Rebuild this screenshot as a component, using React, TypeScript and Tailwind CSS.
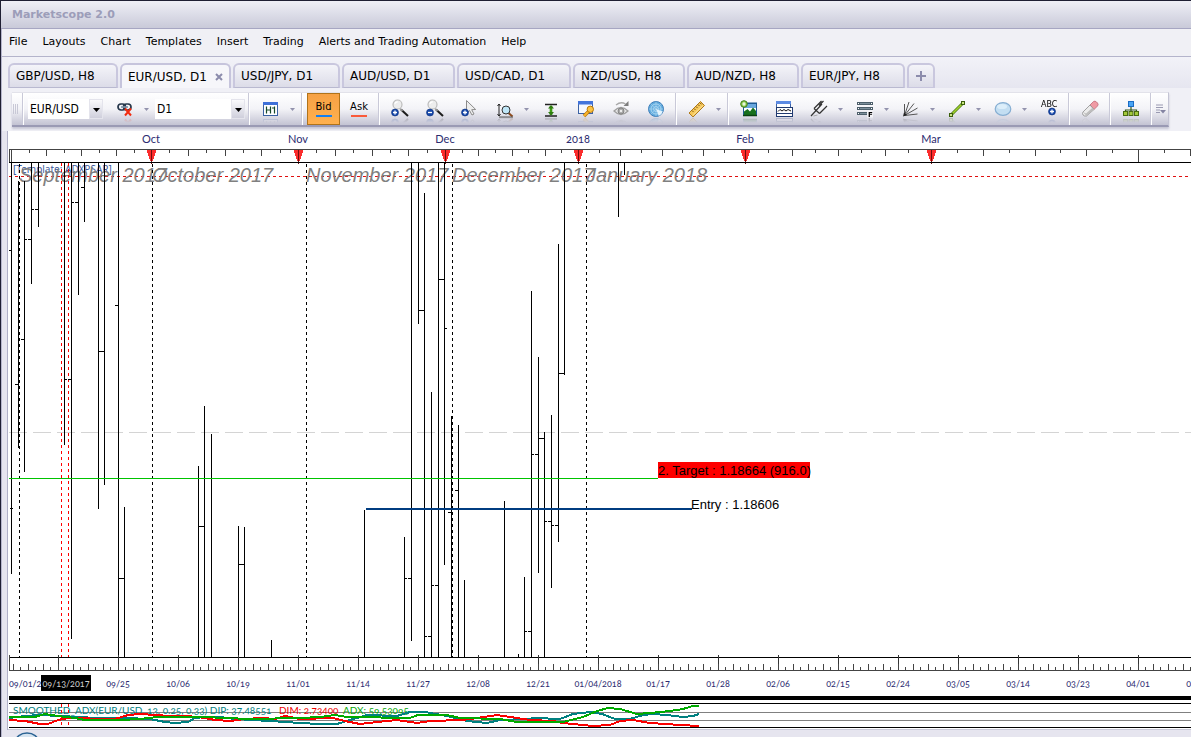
import React from "react";

const UI = "font-['DejaVu_Sans',Verdana,sans-serif]";
const TAHOMA = "font-['DejaVu_Sans_Condensed','Noto_Sans',Tahoma,sans-serif]";

const MENU = ["File", "Layouts", "Chart", "Templates", "Insert", "Trading", "Alerts and Trading Automation", "Help"];

const TABS = [
  { label: "GBP/USD, H8", width: "w-[110px]" },
  { label: "EUR/USD, D1", width: "w-[111px]", active: true },
  { label: "USD/JPY, D1", width: "w-[107px]" },
  { label: "AUD/USD, D1", width: "w-[113px]" },
  { label: "USD/CAD, D1", width: "w-[114px]" },
  { label: "NZD/USD, H8", width: "w-[112px]" },
  { label: "AUD/NZD, H8", width: "w-[112px]" },
  { label: "EUR/JPY, H8", width: "w-[104px]" },
];

/* ---------- toolbar icons ---------- */

function Icon({ children }: { children: React.ReactNode }) {
  return (
    <svg
      width="18"
      height="18"
      viewBox="0 0 18 18"
      fill="none"
      className="overflow-visible [-webkit-box-reflect:below_-1px_linear-gradient(transparent_68%,rgba(0,0,0,0.28))]"
      aria-hidden="true"
    >
      {children}
    </svg>
  );
}

const Badge = ({ x, y, minus }: { x: number; y: number; minus?: boolean }) => (
  <g>
    <circle cx={x} cy={y} r="3.5" fill="#1446a8" stroke="#0c2f7c" strokeWidth="0.6" />
    <path d={minus ? `M${x - 2} ${y}h4` : `M${x - 2} ${y}h4M${x} ${y - 2}v4`} stroke="#fff" strokeWidth="1.3" />
  </g>
);

const Lens = () => (
  <g>
    <path d="M10 9.500L17 16" stroke="#1c1c1c" strokeWidth="2" />
    <path d="M9 8.500L11.500 11" stroke="#999" strokeWidth="1.6" />
    <circle cx="6.5" cy="4.500" r="4.500" fill="#ededed" stroke="#bcbcbc" strokeWidth="1.2" />
    <path d="M3.800 3.800a3 3 0 0 1 3-2" stroke="#fff" strokeWidth="1.2" />
  </g>
);

const icons = {
  link: (
    <Icon>
      <rect x="2" y="4" width="7.500" height="6" rx="3" stroke="#27384c" strokeWidth="1.700" />
      <rect x="7.500" y="4" width="7.500" height="6" rx="3" stroke="#27384c" strokeWidth="1.700" />
      <path d="M5 7h7" stroke="#7f95aa" strokeWidth="1.6" />
      <path d="M9 8.500l6 7M15 8.500l-6 7" stroke="#f22c10" strokeWidth="2" />
    </Icon>
  ),
  period: (
    <Icon>
      <rect x="1.500" y="2.500" width="14" height="13" fill="#fff" stroke="#3c62a4" />
      <path d="M1 2h15v3H1z" fill="#3f70d8" />
      <path d="M4.500 6.500v7M4.500 10h4M8.500 6.500v7M10 8h2M12.500 6.500v7" stroke="#174a2a" strokeWidth="1.200" />
    </Icon>
  ),
  zoomIn: <Icon><Lens /><Badge x={4} y={12.500} /></Icon>,
  zoomOut: <Icon><Lens /><Badge x={4} y={12.500} minus /></Icon>,
  cursor: (
    <Icon>
      <path d="M5.500.5v13l3-3 2.500 4.500 2-1-2.300-4.300 4-.2z" fill="#eee" stroke="#8a8a8a" />
      <Badge x={4} y={12.500} />
    </Icon>
  ),
  range: (
    <Icon>
      <path d="M3 4v12M1.500 6L3 4l1.500 2M1.500 14L3 16l1.500-2" stroke="#222" />
      <path d="M12.500 13l4 3.500" stroke="#8c4a1c" strokeWidth="2" />
      <circle cx="10" cy="10" r="4" fill="#bfe6f7" stroke="#333" />
      <path d="M3 17h14" stroke="#555" />
    </Icon>
  ),
  autoscale: (
    <Icon>
      <path d="M3 4.500h12M3 16h12" stroke="#222" strokeWidth="1.300" />
      <path d="M9 6v9" stroke="#3f9c14" strokeWidth="2.600" />
      <path d="M6 8.500L9 5l3 3.500zM6 12l3 3.500 3-3.500z" fill="#2f7d10" />
    </Icon>
  ),
  properties: (
    <Icon>
      <rect x="1.500" y="1.500" width="14" height="12" fill="#f4f8ff" stroke="#3c62a4" />
      <path d="M1 1h15v3.500H1z" fill="#4274dc" />
      <path d="M7 16l5-5" stroke="#b87608" strokeWidth="3.400" />
      <path d="M7.200 15.800l5-5" stroke="#f9b52c" strokeWidth="2" />
      <circle cx="13.300" cy="9.300" r="3.200" fill="#fcc544" stroke="#b87608" />
    </Icon>
  ),
  eye: (
    <Icon>
      <path d="M2 11q7-7 14 0-7 7-14 0z" fill="#e8e8e8" stroke="#a0a0a0" strokeWidth="1.300" />
      <circle cx="9" cy="11" r="3" fill="#a8a8a8" stroke="#858585" />
      <circle cx="9" cy="11" r="1.200" fill="#eee" />
      <path d="M4 5q5-4 9.500-1" stroke="#a8a8a8" strokeWidth="1.300" />
      <path d="M16.500 1v5h-5z" fill="#7c7c7c" />
    </Icon>
  ),
  radar: (
    <Icon>
      <circle cx="9" cy="9" r="7.500" fill="#64aee0" stroke="#3d7db8" />
      <circle cx="9" cy="9" r="5" stroke="#b9def5" strokeWidth="0.800" />
      <circle cx="9" cy="9" r="2.500" stroke="#b9def5" strokeWidth="0.800" />
      <path d="M9 1.500v15M1.500 9h15M3.700 3.700l10.600 10.600M14.300 3.700L3.700 14.300" stroke="#a8d3ef" strokeWidth="0.600" />
      <path d="M9 9l6.800 2.500a7.300 7.300 0 0 1-4 4.500z" fill="#e4f4fd" />
    </Icon>
  ),
  ruler: (
    <Icon>
      <path d="M1 13L12.500 1.500l4 4L5 17z" fill="#f6c85a" stroke="#b07a1c" />
      <path d="M4 10.500l1.500 1.500M6 8.500L7.500 10M8 6.500L9.500 8M10 4.500L11.500 6M12 2.800l1.500 1.500" stroke="#7c5412" />
      <path d="M4.800 15.500L15 5.500" stroke="#fbe5a4" />
    </Icon>
  ),
  image: (
    <Icon>
      <rect x="3" y="2.500" width="14" height="13.500" fill="#1d5a94" />
      <path d="M4 4h12v9H4z" fill="#fff" />
      <path d="M4 4h12v4H4z" fill="#6aa8de" />
      <path d="M4 15.500v-4l3.500-2.500 2.500 2.500 3-4 3 3.500v4.500z" fill="#17701c" />
      <path d="M3 15.500h14" stroke="#0c4210" strokeWidth="1.500" />
      <circle cx="4" cy="4" r="3.300" fill="#90cc50" stroke="#3f7e18" />
      <path d="M2.300 4h3.400M4 2.300v3.400" stroke="#fff" strokeWidth="1.200" />
    </Icon>
  ),
  windows: (
    <Icon>
      <rect x="1.500" y="1.500" width="14" height="10" fill="#fff" stroke="#3c62a4" />
      <path d="M1 1h15v3H1z" fill="#5d8be2" />
      <rect x="1.500" y="7.500" width="16" height="9" fill="#fff" stroke="#203a70" />
      <path d="M3 11.500l2-2 2 1.500 2-1.500 2 1.500 2-1.500 3 1.500" stroke="#111" />
      <path d="M2 13.500h15" stroke="#203a70" />
    </Icon>
  ),
  pitchfork: (
    <Icon>
      <path d="M1 16L12 4M4 8.500l5.500 5M4 8.500L11.500 1M9.500 13.500L17 6M9 5.500L13.500 1" stroke="#333" strokeWidth="1.200" />
      <path d="M3.500 16l4-1" stroke="#999" strokeWidth="0.800" />
    </Icon>
  ),
  levels: (
    <Icon>
      {[2, 7, 12].map((y) => (
        <g key={y}>
          <path d={`M1 ${y}h16v3H1z`} fill="#4d5f6b" />
          <path d={`M2 ${y + 1.5}h1M15 ${y + 1.5}h1`} stroke="#fff" />
          <path d={`M4 ${y + 1.5}h10`} stroke="#7c8f9b" />
        </g>
      ))}
      <path d="M11 10.500h6v7h-6z" fill="#f4f4f8" />
      <text x="12" y="17" fontSize="7" fontWeight="bold" fill="#000">F</text>
    </Icon>
  ),
  fan: (
    <Icon>
      <path d="M2.500 15.500V4M2.500 15.500L7 2M2.500 15.500L12 3.500M2.500 15.500L15.500 8M2.500 15.500l13-1.500" stroke="#555" />
      <path d="M1 16.500l4-1.500-3-2.500z" fill="#222" />
    </Icon>
  ),
  line: (
    <Icon>
      <path d="M3 15L15 3" stroke="#4c7a10" strokeWidth="3" />
      <path d="M3 15L15 3" stroke="#a0d030" strokeWidth="1.600" />
      <rect x="1.500" y="13.500" width="3" height="3" fill="#c9e680" stroke="#3c600c" />
      <rect x="13.500" y="1.500" width="3" height="3" fill="#c9e680" stroke="#3c600c" />
    </Icon>
  ),
  ellipse: (
    <Icon>
      <ellipse cx="9" cy="9" rx="7.800" ry="6.300" fill="#c3def2" stroke="#86aed2" strokeWidth="1.200" />
      <ellipse cx="8" cy="6.500" rx="5" ry="2.600" fill="#dceefa" />
    </Icon>
  ),
  text: (
    <Icon>
      <text x="1" y="7" fontSize="8" fill="#000">ABC</text>
      <Badge x={12} y={11.500} />
    </Icon>
  ),
  eraser: (
    <Icon>
      <path d="M9 5l3.500-3.500q1.500-1 3 .5l1 1q1.300 1.500 0 3L13 9.500z" fill="#ef9aa4" stroke="#c06a78" strokeWidth="0.800" />
      <path d="M9 5L2 12q-1 1.500 0 3 1.500 1.500 3.500 1L13 9.500z" fill="#ececec" stroke="#8d8d8d" strokeWidth="0.800" />
      <path d="M2 12l3.500 4L13 9.500l-1.500-1.700L5 13.500z" fill="#bdbdbd" />
    </Icon>
  ),
  tree: (
    <Icon>
      <path d="M9 6v4M3.500 12v-2h11v2M9 10v2" stroke="#35591c" strokeWidth="1.200" />
      <rect x="6.500" y="1.500" width="5" height="5" fill="#49a4f4" stroke="#1c6cc4" />
      <rect x="1.500" y="11.500" width="4" height="4" fill="#a2c83a" stroke="#4a6c10" />
      <rect x="7" y="11.500" width="4" height="4" fill="#a2c83a" stroke="#4a6c10" />
      <rect x="12.500" y="11.500" width="4" height="4" fill="#a2c83a" stroke="#4a6c10" />
    </Icon>
  ),
};

/* ---------- toolbar parts ---------- */

const Sep = () => <span className="mr-px h-8 w-0.5 border-l border-[#c9c9d8] bg-white" />;

function Tool({ icon, label, menu }: { icon: React.ReactNode; label: string; menu?: boolean }) {
  return (
    <span className="flex shrink-0 items-center">
      <button aria-label={label} className="flex h-8 w-8 items-center justify-center">
        {icon}
      </button>
      {menu && (
        <button aria-label={`${label} options`} className="flex h-8 w-[11px] items-center justify-center">
          <svg width="5" height="3" viewBox="0 0 5 3" aria-hidden="true">
            <path d="M0 0h5L2.500 3z" fill="#9393ad" />
          </svg>
        </button>
      )}
    </span>
  );
}

function Combo({ label, options, className }: { label: string; options: string[]; className: string }) {
  return (
    <label className={`relative flex h-5 shrink-0 ${className}`}>
      <select aria-label={label} className={`h-5 w-full appearance-none bg-white pl-0.5 text-[12px] leading-5 text-black ${TAHOMA}`}>
        {options.map((o) => (
          <option key={o}>{o}</option>
        ))}
      </select>
      <span className="pointer-events-none absolute inset-y-0 right-0 flex w-3.5 items-center justify-center border border-[#e4e4ec] bg-linear-to-b from-[#fafafc] to-[#cfcfdc] pt-0.5">
        <svg width="7" height="4" viewBox="0 0 7 4" aria-hidden="true">
          <path d="M0 0h7L3.500 4z" fill="#000" />
        </svg>
      </span>
    </label>
  );
}

/* ---------- chart data ---------- */

const TOP = 162;
const BASE = 657;

const BARS: [number, number, number][] = [
  [11, TOP, 574], [18, 181, 448], [24, 181, 472], [31, TOP, 284], [38, TOP, 227],
  [64, TOP, 445], [71, TOP, 639], [78, TOP, 295], [84, TOP, 222], [98, TOP, 509],
  [104, TOP, 485], [118, TOP, BASE], [124, 507, BASE], [198, 466, BASE], [204, 406, BASE],
  [211, 434, BASE], [238, 526, BASE], [244, 527, BASE], [271, 640, BASE], [364, 510, BASE],
  [404, 537, BASE], [411, TOP, 641], [418, TOP, 324], [424, 193, BASE], [431, 392, BASE],
  [438, TOP, BASE], [444, TOP, 565], [451, 416, BASE], [458, 425, BASE], [464, 580, BASE],
  [504, 501, BASE], [518, 654, BASE], [524, 577, BASE], [531, 291, BASE], [538, 357, 573],
  [544, 432, BASE], [551, 415, 588], [558, 244, 542], [564, TOP, 375], [618, TOP, 217],
  [624, TOP, 175],
];

/* close of one bar and open of the next: [x, next x, y] */
const STEPS: [number, number, number][] = [
  [24, 31, 239], [31, 38, 209], [64, 71, 379], [71, 78, 202], [98, 104, 351], [118, 124, 578],
  [198, 204, 526], [238, 244, 564], [404, 411, 578], [418, 424, 310], [424, 431, 636],
  [431, 438, 585], [438, 444, 279], [524, 531, 631], [531, 538, 454], [538, 544, 438],
  [544, 551, 521], [551, 558, 525], [558, 564, 373],
];
const OPENS: [number, number][] = [[12, 250], [18, 384], [24, 339], [84, 187], [118, 305], [451, 512], [458, 490]];
const CLOSES: [number, number][] = [[10, 508], [444, 328]];

const MONTHS = [
  { x: 151, label: "Oct" }, { x: 298, label: "Nov" }, { x: 445, label: "Dec" },
  { x: 578, label: "2018" }, { x: 745, label: "Feb" }, { x: 931, label: "Mar" },
];
const MONTH_EDGES = [11, 151, 298, 445, 578, 745, 931, 1138, 1345];

const WATERMARKS = [
  { x: 19, label: "September 2017" }, { x: 152, label: "October 2017" }, { x: 306, label: "November 2017" },
  { x: 452, label: "December 2017" }, { x: 586, label: "January 2018" },
];

const DATES = [
  "09/25", "10/06", "10/19", "11/01", "11/14", "11/27", "12/08", "12/21", "01/04/2018", "01/17", "01/28",
  "02/06", "02/15", "02/24", "03/05", "03/14", "03/23", "04/01", "04/10",
];

const ADX =
  "9,717 35,717 45,714 58,716 66,717 75,718 85,720 120,720 140,719 158,717 188,717 205,717 225,718 250,719 300,718 320,717 335,715 347,717 375,717 387,718 410,718 418,715 447,715 460,718 500,719 517,722 563,722 583,717 597,711 608,708 620,709 637,714 650,713 670,711 683,709 693,706 699,706";
const DIP =
  "9,718 25,716 40,715 60,716 80,717 95,718 125,718 150,719 165,722 175,723 188,722 195,718 205,717 220,717 235,719 270,721 285,722 300,723 320,724 337,724 350,720 367,715 397,716 410,712 425,712 447,716 467,721 487,723 500,720 527,719 535,718 560,719 573,714 590,712 602,714 615,719 630,719 643,715 653,714 667,715 683,717 693,716 699,714";
const DIM =
  "9,720 25,721 40,724 48,724 58,720 68,718 80,718 100,719 115,719 128,715 140,714 170,716 188,716 205,718 215,720 230,721 245,719 262,718 275,719 285,716 300,719 333,718 345,721 360,724 377,722 397,720 417,723 430,721 463,720 477,718 497,715 517,718 530,720 553,721 563,723 593,726 610,725 620,721 633,720 650,723 680,725 699,726";

const range = (from: number, to: number, step: number) =>
  Array.from({ length: Math.ceil((to - from) / step) }, (_, i) => from + i * step);

function Chart() {
  const axis = "font-['Lato','Open_Sans',sans-serif] oldstyle-nums";
  return (
    <svg className="block h-[599px] w-full" shapeRendering="crispEdges" role="img" aria-label="EUR/USD daily chart">
      {/* drawing units are window pixels, the plot starts at (8, 131) */}
      <g transform="translate(-8 -131)">
        <text x="13" y="173" fill="#3c5a9c" className="font-['Noto_Sans',sans-serif] text-[10px]">[Template: ADXPSAR]</text>

        {/* month ruler */}
        <path d="M9 149.500H4000M9.500 149v13M11.500 149v13" stroke="#444" />
        {MONTH_EDGES.slice(0, -1).map((x, i) =>
          range(1, 8, 1).map((k) => {
            const tx = Math.round(x + ((MONTH_EDGES[i + 1] - x) * k) / 8);
            return <path key={`${x}-${k}`} d={`M${tx}.5 149v${k % 2 ? 4 : 7}`} stroke="#444" />;
          }),
        )}
        <path d="M1138.500 149v13" stroke="#444" />
        {MONTHS.map((m) => (
          <g key={m.label}>
            <path d={`M${m.x - 4} 150h9v3h-1v3h-1v3h-1v2h-3v-2h-1v-3h-1v-3h-1z`} fill="#fb2c2c" />
            <path d={`M${m.x}.5 150v15`} stroke="#701010" strokeDasharray="12 1 1 1" />
            <text x={m.x} y="143" textAnchor="middle" fill="#2b2b70" className={`text-[11px] ${axis}`}>{m.label}</text>
          </g>
        ))}
        <path d="M9 162.500H4000" stroke="#000" />

        {/* reference lines */}
        <path d="M9 432.500H4000" stroke="#d4d4d4" strokeDasharray="18 6" />
        <path d="M9 176.500H4000" stroke="#e01010" strokeDasharray="3 3" />
        {WATERMARKS.map((w) => (
          <g key={w.label}>
            <path d={`M${w.x}.5 164V657`} stroke="#000" strokeDasharray="3 3" />
            <text x={w.x} y="182" fill="#808080" className="font-['Liberation_Sans',Arial,sans-serif] text-[20px] italic">{w.label}</text>
          </g>
        ))}
        <path d="M61.500 163V657M68.500 163V657" stroke="#f00" strokeDasharray="3 3" />

        {/* price bars */}
        <g stroke="#000">
          {BARS.map(([x, a, b]) => <path key={x} d={`M${x}.5 ${a}V${b}`} />)}
          {STEPS.map(([a, b, y]) => <path key={`${a}-${y}`} d={`M${a} ${y}.5h3M${b - 3} ${y}.5h3`} />)}
          {OPENS.map(([x, y]) => <path key={x} d={`M${x - 3} ${y}.5h3`} />)}
          {CLOSES.map(([x, y]) => <path key={x} d={`M${x} ${y}.5h3`} />)}
        </g>

        {/* trade levels */}
        <path d="M9 478.500H658" stroke="#00c400" />
        <path d="M366 509H692" stroke="#003c80" strokeWidth="2" />
        <path d="M658 462h152v16H658z" fill="#fe0000" />
        <g fill="#000" className="font-['Liberation_Sans',Arial,sans-serif] text-[13px]">
          <text x="658" y="475">2. Target : 1.18664 (916.0)</text>
          <text x="691" y="509">Entry : 1.18606</text>
        </g>

        {/* date ruler */}
        <path d="M9 657.500H4000" stroke="#000" />
        <path d="M9 670.500H4000M9.500 655v15" stroke="#444" />
        {range(58, 4000, 60).map((x) => <path key={x} d={`M${x}.5 655v15`} stroke="#333" />)}
        {range(13, 4000, 15).map((x) => <path key={x} d={`M${x}.5 664v6M${x + 7}.5 667v3`} stroke="#444" />)}
        <g fill="#2b2b70" className={`text-[9px] ${axis}`}>
          <text x="9" y="687">09/01/2017</text>
          {DATES.map((d, i) => <text key={d} x={118 + i * 60} y="687" textAnchor="middle">{d}</text>)}
          <path d="M41 675h50v16H41z" fill="#000" />
          <text x="66" y="687" textAnchor="middle" fill="#d0d0d0">09/13/2017</text>
        </g>

        {/* indicator panel */}
        <path d="M9 696h4000v4H9z" fill="#000" />
        <path d="M9 703.500H4000M9 727.500H4000" stroke="#000" />
        <path d="M9 712.500H4000M9 720.500H4000" stroke="#808080" />
        <text y="714" className={`text-[10px] ${axis}`}>
          <tspan x="13" fill="#008080">SMOOTHED_ADX(EUR/USD, 13, 0.25, 0.33) DIP: 37.48551</tspan>
          <tspan x="279" fill="#f00000">DIM: 2.73400</tspan>
          <tspan x="343" fill="#00a800">ADX: 59.53095</tspan>
        </text>
        <path d="M61.500 704V727M68.500 704V727" stroke="#f00" strokeDasharray="3 3" />
        <g fill="none" strokeWidth="2">
          <polyline points={DIP} stroke="#008080" />
          <polyline points={DIM} stroke="#fa0000" />
          <polyline points={ADX} stroke="#00aa00" />
        </g>
        <path d="M8 729.500H4000" stroke="#c9c9d8" />
      </g>
    </svg>
  );
}

export default function App() {
  return (
    <div className={`flex min-h-screen flex-col overflow-hidden border-t border-l border-[#1f1f33] bg-[#e6e5ef] text-[11px] text-black ${UI}`}>
      <header className="flex h-7 items-center border-b border-[#a6a6c2] bg-linear-to-b from-[#efeff6] to-[#c9cad9] pt-0.5 pl-[11px]">
        <h1 className="font-bold text-[#9c9db9]">Marketscope 2.0</h1>
      </header>

      <nav className="flex h-[27px] items-center gap-[15px] border-l border-[#b6b6cc] bg-[#f0f0f5] pl-[7px] whitespace-nowrap">
        {MENU.map((m) => (
          <button key={m}>{m}</button>
        ))}
      </nav>

      <main className="flex flex-1 flex-col border-l border-[#b6b6cc]">
        <div className="border-t border-[#b4b4cb] bg-[#efeff5] pl-[6px]">
          <div role="tablist" className="flex h-[31px] items-end gap-0.5 bg-linear-to-b from-[#f2f2f8] to-[#e6e6f0] text-[12px]">
            {TABS.map((t) => (
              <div
                key={t.label}
                className={`flex h-[25px] shrink-0 items-center justify-between rounded-t-md border-x-2 border-t-2 px-1.5 whitespace-nowrap ${t.width} ${
                  t.active
                    ? "border-[#c6c4dc] bg-[#f6f6fa]"
                    : "border-b border-[#c9c7de] border-b-[#b9b9d0] bg-linear-to-b from-[#f4f4f9] to-[#dcdce8]"
                }`}
              >
                <button role="tab" aria-selected={!!t.active}>{t.label}</button>
                {t.active && (
                  <button aria-label={`Close ${t.label}`}>
                    <svg className="block" width="8" height="8" viewBox="0 0 8 8" aria-hidden="true">
                      <path d="M1 1l6 6M7 1L1 7" stroke="#8c8cac" strokeWidth="2" />
                    </svg>
                  </button>
                )}
              </div>
            ))}
            <button
              aria-label="New chart"
              className="flex h-[25px] w-7 items-center justify-center rounded-t-md border-x-2 border-t-2 border-b border-[#c9c7de] bg-linear-to-b from-[#f4f4f9] to-[#dcdce8]"
            >
              <svg width="10" height="10" viewBox="0 0 10 10" aria-hidden="true">
                <path d="M5 0v10M0 5h10" stroke="#8c8cac" strokeWidth="2" />
              </svg>
            </button>
          </div>
          <div className="h-[43px] bg-[#f0f0f6] pt-1 pl-1">
            <div
              role="toolbar"
              aria-label="Chart tools"
              className="flex h-[35px] w-fit items-center gap-[3px] border-t border-r border-b-2 border-[#e2e2ea] border-r-[#c4c4d4] border-b-[#9a9ab4] bg-linear-to-b from-white via-[#f3f3f7] to-[#c3c3d3] shadow-[0_2px_2px_rgba(120,120,150,0.35)]"
            >
              <span className="flex w-[7px] shrink-0 justify-center gap-px">
                <i className="h-2.5 w-px bg-[#c8c8d6]" />
                <i className="h-2.5 w-px bg-[#c8c8d6]" />
                <i className="h-2.5 w-px bg-[#c8c8d6]" />
              </span>
              <Sep />
              <Combo label="Instrument" options={["EUR/USD", "GBP/USD"]} className="w-[75px]" />
              <span className="ml-[3px]"><Tool icon={icons.link} label="Unlink instrument" menu /></span>
              <Combo label="Period" options={["D1", "H8"]} className="w-[90px]" />
              <Sep />
              <span className="ml-px"><Tool icon={icons.period} label="Time frame" menu /></span>
              <Sep />
              <button className="flex h-8 w-[33px] shrink-0 flex-col items-center justify-center gap-0.5 border border-[#b0731a] bg-linear-to-b from-[#f6a145] to-[#ffb04e] text-[10px] leading-3">
                Bid
                <i className="h-0.5 w-4 bg-[#1480f0]" />
              </button>
              <button className="flex h-8 w-8 shrink-0 flex-col items-center justify-center gap-0.5 text-[10px] leading-3">
                Ask
                <i className="h-0.5 w-4 bg-[#fa5a3a]" />
              </button>
              <Sep />
              <Tool icon={icons.zoomIn} label="Zoom in" />
              <Tool icon={icons.zoomOut} label="Zoom out" />
              <Tool icon={icons.cursor} label="Cursor" />
              <Tool icon={icons.range} label="Zoom range" menu />
              <Tool icon={icons.autoscale} label="Auto scale" />
              <Tool icon={icons.properties} label="Properties" />
              <Tool icon={icons.eye} label="Show or hide" />
              <Tool icon={icons.radar} label="Market radar" />
              <Sep />
              <Tool icon={icons.ruler} label="Ruler" menu />
              <Sep />
              <Tool icon={icons.image} label="Add picture" />
              <Tool icon={icons.windows} label="Add indicator" />
              <Tool icon={icons.pitchfork} label="Pitchfork" menu />
              <Tool icon={icons.levels} label="Fibonacci levels" menu />
              <Tool icon={icons.fan} label="Fan" menu />
              <Tool icon={icons.line} label="Line" menu />
              <Tool icon={icons.ellipse} label="Ellipse" menu />
              <Tool icon={icons.text} label="Text label" />
              <Sep />
              <Tool icon={icons.eraser} label="Eraser" />
              <Sep />
              <Tool icon={icons.tree} label="Object tree" />
              <Sep />
              <button aria-label="More tools" className="flex h-8 w-3 shrink-0 items-center">
                <svg width="10" height="10" viewBox="0 0 10 10" aria-hidden="true">
                  <path d="M0 1h7M0 3.500h7M0 6h4M0 8.500h4" stroke="#9a9ab2" />
                  <path d="M4 6h6L7 9.500z" fill="#8484a2" />
                </svg>
              </button>
            </div>
          </div>
        </div>

        <div className="flex-1 pl-[5px]">
          <div className="border-l border-[#b0b0c8] bg-white">
            <Chart />
          </div>
          <svg className="block h-[7px] w-full" aria-hidden="true">
            <ellipse cx="20" cy="12" rx="11.500" ry="9" fill="#d6e4f0" stroke="#2c6494" strokeWidth="1.500" />
          </svg>
        </div>
      </main>
    </div>
  );
}
